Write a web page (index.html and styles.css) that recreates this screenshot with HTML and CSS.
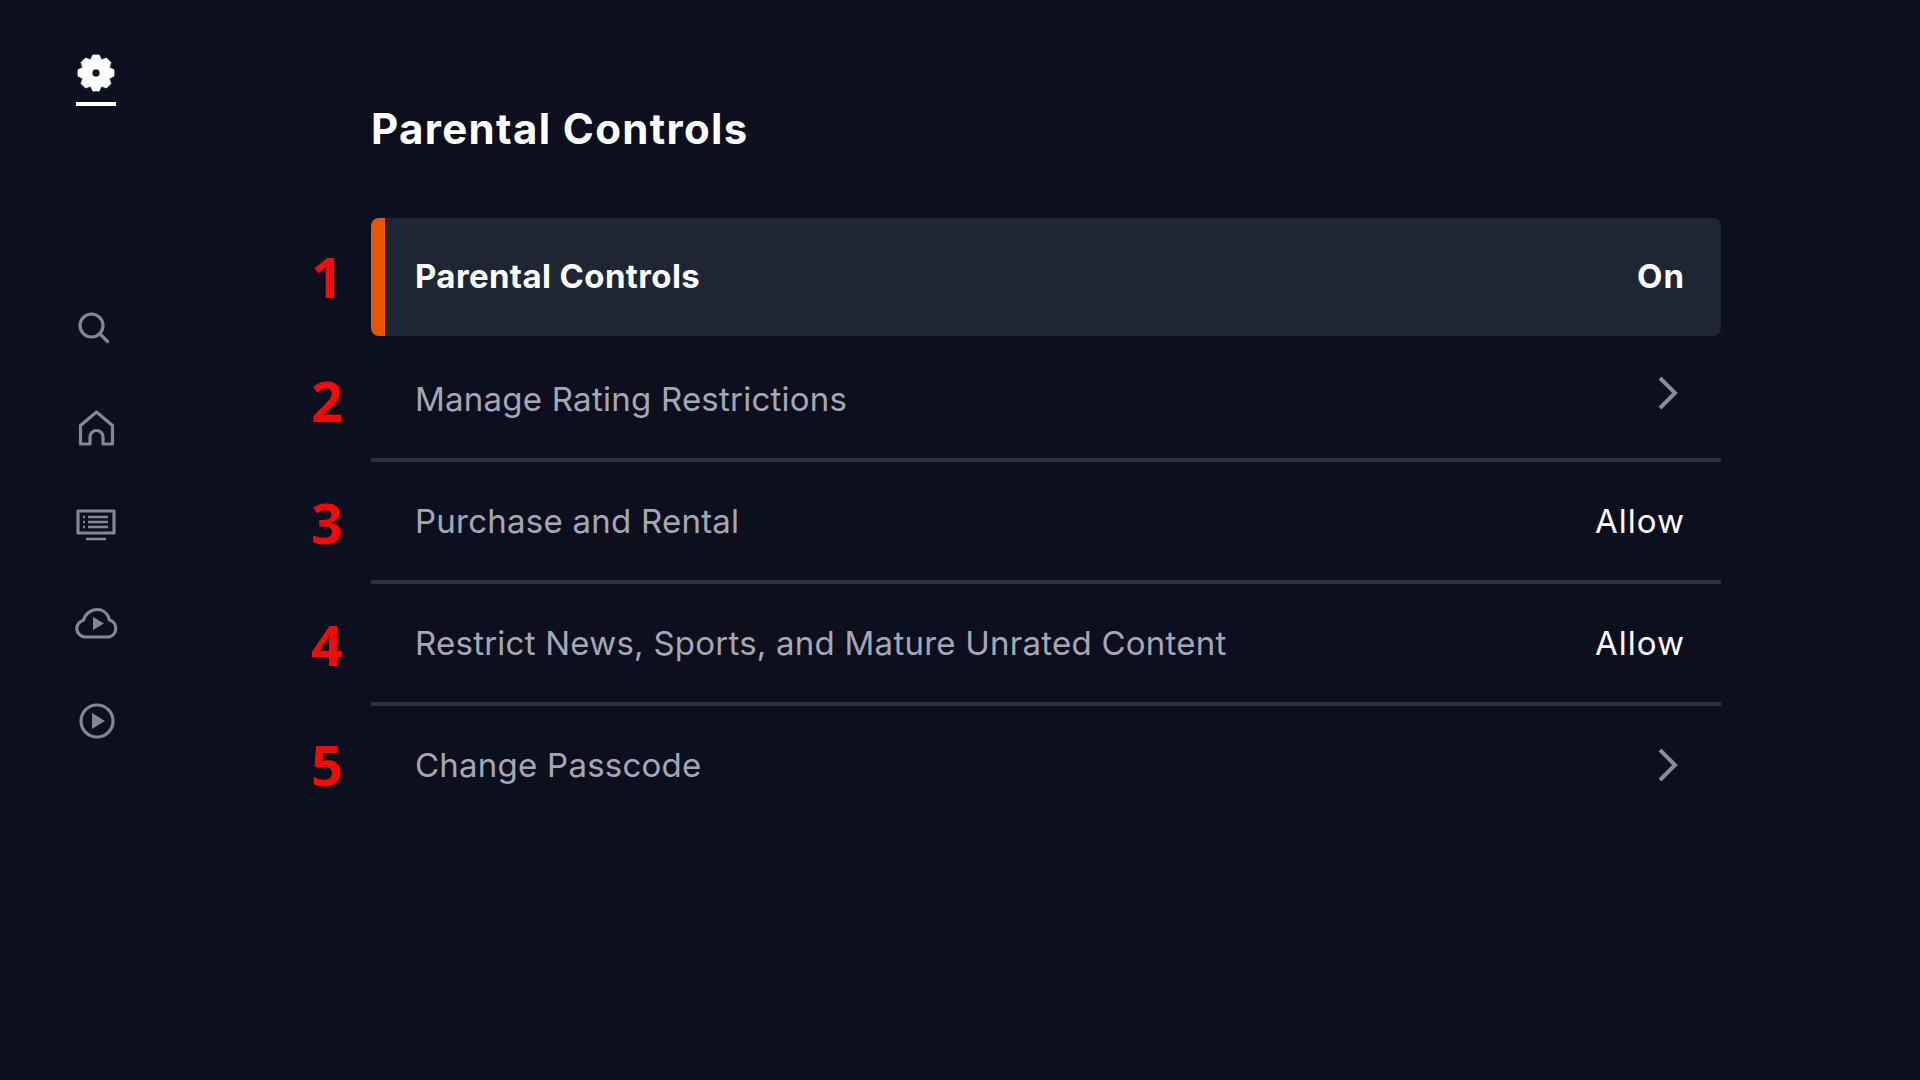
FILE: index.html
```html
<!DOCTYPE html>
<html lang="en">
<head>
<meta charset="utf-8">
<title>Parental Controls</title>
<link rel="stylesheet" href="styles.css">
</head>
<body>
<div class="app">
  <nav class="sidebar">
    <div class="settings">
      <svg class="gear" viewBox="0 0 24 24" width="40" height="40"><path fill-rule="evenodd" fill="#fff" stroke="#fff" stroke-width=".4" stroke-linejoin="round" d="M10.090 1.170H13.910L15.290 4.050 18.310 2.990 21.010 5.690 19.950 8.710 22.830 10.090V13.910L19.950 15.290 21.010 18.310 18.310 21.010 15.290 19.950 13.910 22.830H10.090L8.710 19.950 5.690 21.010 2.990 18.310 4.050 15.290 1.170 13.910V10.090L4.050 8.710 2.990 5.690 5.690 2.990 8.710 4.050ZM12 9.600a2.400 2.400 0 1 0 0 4.800 2.400 2.400 0 0 0 0-4.800Z"/></svg>
    </div>
    <div class="nav-icons">
      <svg class="nav-icon" viewBox="0 0 48 48"><circle cx="19.500" cy="21.500" r="11.500"/><path d="M28 30l7.500 7.500"/></svg>
      <svg class="nav-icon" viewBox="0 0 48 48"><path d="M8.500 23.500L24.500 10l16 13.500V42H31V35a6.500 6.500 0 0 0-13 0v7H8.500z"/></svg>
      <svg class="nav-icon" viewBox="0 0 48 48"><rect x="6" y="11" width="36" height="22"/><path class="thin" d="M16 17h20M16 22h20M16 27h20M11 17h2M11 22h2M11 27h2M14 39h20"/></svg>
      <svg class="nav-icon" viewBox="0 0 48 48"><path d="M13 39a8.500 8.500 0 0 1-1.500-16.800C13 16 19 11.500 25 11.500c6.500 0 11 4.500 12.500 10.500A8.800 8.800 0 0 1 37 39z"/><path class="solid" d="M21 19l11 6.500L21 32z"/></svg>
      <svg class="nav-icon" viewBox="0 0 48 48"><circle cx="25" cy="25" r="16"/><path class="solid" d="M20 17l13 8-13 8z"/></svg>
    </div>
  </nav>
  <main class="content">
    <h1 class="title">Parental Controls</h1>
    <div class="list">
      <div class="item item-first">
        <span class="num">1</span>
        <div class="row row-active"><span class="label">Parental Controls</span><span class="value">On</span></div>
      </div>
      <div class="item">
        <span class="num">2</span>
        <div class="row row-line"><span class="label">Manage Rating Restrictions</span><svg class="chev chev-up" viewBox="0 0 22 34"><path d="M3 2l15 15L3 32"/></svg></div>
      </div>
      <div class="item">
        <span class="num">3</span>
        <div class="row row-line"><span class="label">Purchase and Rental</span><span class="value">Allow</span></div>
      </div>
      <div class="item">
        <span class="num">4</span>
        <div class="row row-line"><span class="label">Restrict News, Sports, and Mature Unrated Content</span><span class="value">Allow</span></div>
      </div>
      <div class="item">
        <span class="num">5</span>
        <div class="row row-last"><span class="label">Change Passcode</span><svg class="chev" viewBox="0 0 22 34"><path d="M3 2l15 15L3 32"/></svg></div>
      </div>
    </div>
  </main>
</div>
</body>
</html>
```

FILE: styles.css
```css
* { box-sizing: border-box; }
html, body { margin: 0; height: 100%; }
body {
  background: #0d0f1f;
  font-family: "Inter", "Liberation Sans", sans-serif;
  overflow: hidden;
}
.app { display: flex; width: 1920px; height: 1080px; }
.sidebar {
  width: 191px;
  flex: none;
  display: flex;
  flex-direction: column;
  align-items: center;
  padding-top: 53px;
}
.settings {
  width: 40px;
  height: 53px;
  border-bottom: 4px solid #fff;
  display: flex;
  justify-content: center;
}
.gear { display: block; }
.nav-icons {
  margin-top: 198px;
  display: flex;
  flex-direction: column;
  gap: 50px;
}
.nav-icon {
  display: block;
  width: 48px;
  height: 48px;
  fill: none;
  stroke: #85868f;
  stroke-width: 3.2;
  stroke-linecap: round;
  stroke-linejoin: round;
}
.nav-icon .thin { stroke-width: 2.5; stroke-linecap: butt; }
.nav-icon .solid { fill: #85868f; stroke: none; }
.content { flex: none; width: 1531px; padding-top: 105px; }
.title {
  margin: 0 0 65px 180px;
  font-size: 42px;
  line-height: 48px;
  font-weight: 700;
  letter-spacing: 1.35px;
  color: #fff;
}
.item { display: flex; align-items: stretch; }
.item-first { margin-bottom: 4px; }
.num {
  width: 180px;
  flex: none;
  padding: 0 0 2px 120px;
  align-self: center;
  font-family: "Open Sans", sans-serif;
  font-weight: 700;
  font-size: 56px;
  line-height: 60px;
  color: #f50a0a;
}
.row {
  flex: none;
  width: 1350px;
  height: 122px;
  display: flex;
  align-items: center;
  justify-content: space-between;
  padding: 0 36px 0 44px;
  font-size: 33px;
  letter-spacing: .24px;
  color: #a5a8b4;
}
.row-active {
  height: 118px;
  padding-bottom: 2px;
  background: #1e2535;
  border-left: 14px solid #ea5504;
  border-radius: 8px;
  padding-left: 30px;
  color: #fff;
  font-weight: 700;
  letter-spacing: .38px;
}
.row-line { border-bottom: 4px solid #2d2f40; }
.row-last { height: 118px; }
.value { color: #fff; letter-spacing: 1px; }
.chev {
  width: 22px;
  height: 34px;
  margin-right: 6px;
  fill: none;
  stroke: #8a8b94;
  stroke-width: 4;
}
.chev-up { margin-bottom: 12px; }
```
